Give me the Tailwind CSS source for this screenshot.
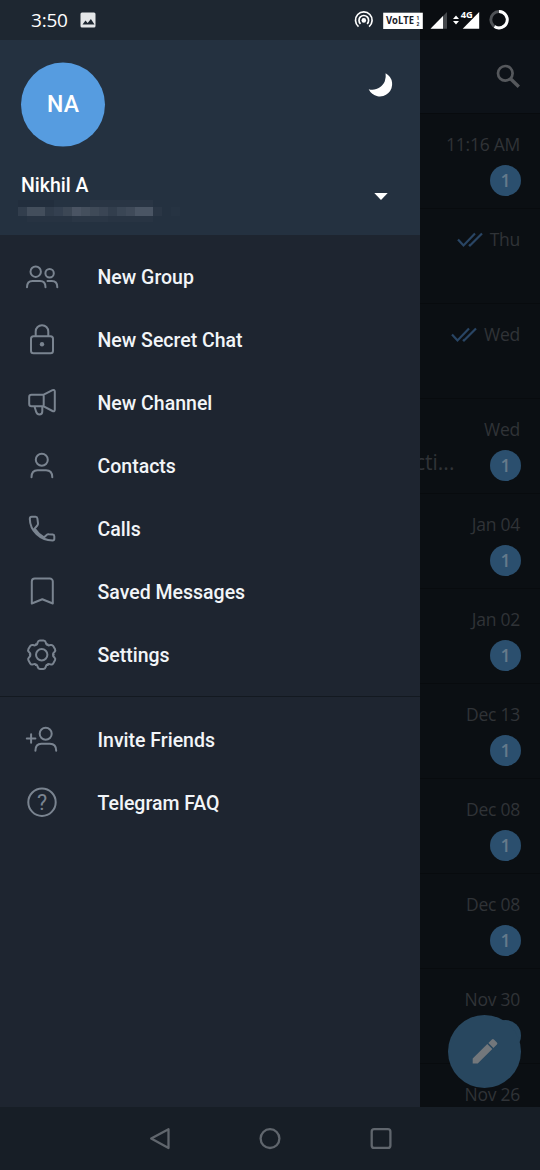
<!DOCTYPE html>
<html lang="en">
<head>
<meta charset="utf-8">
<title>Telegram</title>
<script src="https://cdn.jsdelivr.net/npm/@tailwindcss/browser@4"></script>
</head>
<body class="bg-black">
<div class="relative flex h-[1170px] w-[540px] flex-col overflow-hidden bg-[#0b0f13] font-['Roboto',sans-serif]">

  <div class="flex h-[1107px] overflow-hidden">
    <!-- Drawer -->
    <aside class="flex w-[420px] shrink-0 flex-col bg-[#1e2530]">
      <header class="flex h-[235px] shrink-0 justify-between bg-[#243140] pt-[62px]">
        <div class="flex flex-col pl-[21px]">
          <div class="flex size-[84px] translate-y-[0.6px] items-center justify-center rounded-full bg-[#569ce0] pt-px text-[23px] font-medium text-white">NA</div>
          <div class="mt-[28px] text-[19.500px] leading-6 font-medium text-white">Nikhil A</div>
          <div class="mt-[2px] -ml-[3px] flex flex-col">
            <div class="flex h-[7px]"><i class="w-[36px] bg-[#222e3d]"></i><i class="w-[36px] bg-[#253241]"></i><i class="w-[63px] bg-[#293544]"></i></div>
            <div class="flex h-[9px]">
              <i class="w-[9px] bg-[#323e4d]"></i><i class="w-[18px] bg-[#434e5c]"></i><i class="w-[9px] bg-[#303c4b]"></i><i class="w-[9px] bg-[#344050]"></i><i class="w-[9px] bg-[#3c4755]"></i><i class="w-[9px] bg-[#4a5463]"></i><i class="w-[9px] bg-[#444f5d]"></i><i class="w-[9px] bg-[#3f4a58]"></i><i class="w-[9px] bg-[#3a4554]"></i><i class="w-[9px] bg-[#323e4d]"></i><i class="w-[9px] bg-[#3a4655]"></i><i class="w-[9px] bg-[#3f4a59]"></i><i class="w-[18px] bg-[#4a5564]"></i><i class="w-[9px] bg-[#2a3645]"></i><i class="w-[9px] bg-[#243140]"></i><i class="w-[9px] bg-[#263342]"></i>
            </div>
            <div class="flex h-[6px] pl-[9px]"><i class="w-[45px] bg-[#273342]"></i><i class="w-[36px] bg-[#2a3645]"></i><i class="w-[45px] bg-[#283443]"></i></div>
          </div>
        </div>
        <svg class="h-[173px] w-[80px] shrink-0" viewBox="340 62 80 173">
          <path d="M385.600 73.200A12.300 12.300 0 1 1 368.700 89.200C375.500 91.300 382.500 87 384.800 81.300Q386.200 77.500 385.600 73.200Z" fill="#fff"/>
          <path d="M374.300 193h13.400l-6.700 7z" fill="#fff"/>
        </svg>
      </header>

      <nav class="flex flex-col pt-[11px] text-[19.5px] font-medium text-[#f2f5f8]">
        <div class="flex h-[63px] items-center gap-[33.5px] pl-5">
          <svg class="size-11" viewBox="20 256 44 44" fill="none" stroke="#7a8490" stroke-width="2" stroke-linecap="round"><circle cx="35.700" cy="271.700" r="5.200"/><circle cx="49.600" cy="273.200" r="4.200"/><path d="M27 287.200c0-4.200 2-6.200 5.500-6.200h7.500c3.500 0 5.500 2 5.500 6.200M47.500 281h4.300c3.500 0 5.500 2 5.500 6.200"/></svg>
          <span>New Group</span>
        </div>
        <div class="flex h-[63px] items-center gap-[33.5px] pl-5">
          <svg class="size-11" viewBox="20 319 44 44" fill="none" stroke="#7a8490" stroke-width="2"><rect x="31" y="336.300" width="22" height="17" rx="2.500"/><path d="M35.700 336v-4.500a6.300 6.300 0 0 1 12.600 0v4.500"/><circle cx="42" cy="344.300" r="2.200" fill="#7a8490" stroke="none"/></svg>
          <span>New Secret Chat</span>
        </div>
        <div class="flex h-[63px] items-center gap-[33.5px] pl-5">
          <svg class="size-11" viewBox="20 382 44 44" fill="none" stroke="#7a8490" stroke-width="2" stroke-linejoin="round"><path d="M43.700 394.700H31.500a2.300 2.300 0 0 0-2.300 2.300v7a2.300 2.300 0 0 0 2.300 2.300h12.200zM43.700 394.700L52.500 390.200Q54.800 389.200 54.800 391.500V409.500Q54.800 412 52.500 411L43.700 406.300M34.500 406.500L36.300 412.200Q37.200 414.500 39.300 414.500Q42.300 414.500 42.300 411.500V406.500"/></svg>
          <span>New Channel</span>
        </div>
        <div class="flex h-[63px] items-center gap-[33.5px] pl-5">
          <svg class="size-11" viewBox="20 445 44 44" fill="none" stroke="#7a8490" stroke-width="2" stroke-linecap="round"><circle cx="41.800" cy="459.700" r="6"/><path d="M31.500 477.200c0-4.800 2-7 6-7h8.500c4 0 6.300 2.200 6.300 7"/></svg>
          <span>Contacts</span>
        </div>
        <div class="flex h-[63px] items-center gap-[33.5px] pl-5">
          <svg class="size-11" viewBox="20 508 44 44" fill="none" stroke="#7a8490" stroke-width="2" stroke-linejoin="round"><path d="M31.800 516.800H35.600Q37.200 516.800 37.400 518.500L38 523.300Q38.100 524.600 37.300 525.500L34.600 528.600Q38.200 534 43.900 537.400L46.600 534.900Q47.500 534 48.800 534.200L52.700 534.500Q54.300 534.700 54.300 536.300V538.800Q54.300 540.500 52.600 540.500C40 540.300 30 530.500 29.800 518.900Q29.800 516.800 31.800 516.800Z"/></svg>
          <span>Calls</span>
        </div>
        <div class="flex h-[63px] items-center gap-[33.5px] pl-5">
          <svg class="size-11" viewBox="20 571 44 44" fill="none" stroke="#7a8490" stroke-width="2" stroke-linejoin="round"><path d="M34.800 578.500h15a3 3 0 0 1 3 3v22l-10.500-4.300-10.500 4.300v-22a3 3 0 0 1 3-3z"/></svg>
          <span>Saved Messages</span>
        </div>
        <div class="flex h-[63px] items-center gap-[33.5px] pl-5">
          <svg class="size-11" viewBox="-21.700 -20.700 44 44" fill="none" stroke="#7a8490" stroke-width="2" stroke-linecap="round">
            <defs><path id="tooth" d="M-5.900-10.220C-4.800-9.600-4.300-11-4-12.400C-3.600-14-3-14.300-1.800-14.300H1.800C3-14.300 3.600-14 4-12.400C4.300-11 4.800-9.600 5.900-10.220"/></defs>
            <use href="#tooth"/><use href="#tooth" transform="rotate(60)"/><use href="#tooth" transform="rotate(120)"/><use href="#tooth" transform="rotate(180)"/><use href="#tooth" transform="rotate(240)"/><use href="#tooth" transform="rotate(300)"/>
            <circle r="5.700"/>
          </svg>
          <span>Settings</span>
        </div>
        <div class="mt-[9px] mb-[12px] h-px bg-[#131920]"></div>
        <div class="flex h-[63px] items-center gap-[33.5px] pl-5">
          <svg class="size-11" viewBox="20 719 44 44" fill="none" stroke="#7a8490" stroke-width="2" stroke-linecap="round"><circle cx="45.700" cy="733.700" r="6"/><path d="M35.400 750.700c0-4.800 2-7 6-7h8.500c4 0 6.300 2.200 6.300 7M26.800 738.500h8.600M31.100 734.200v8.600"/></svg>
          <span>Invite Friends</span>
        </div>
        <div class="flex h-[63px] items-center gap-[33.5px] pl-5">
          <svg class="size-11" viewBox="20 782 44 44"><circle cx="42" cy="802.200" r="13.700" fill="none" stroke="#7a8490" stroke-width="2"/><text x="42" y="809.800" text-anchor="middle" font-size="21.500" font-weight="400" fill="#7a8490">?</text></svg>
          <span>Telegram FAQ</span>
        </div>
      </nav>
    </aside>

    <!-- Dimmed chat list -->
    <main class="flex w-[120px] shrink-0 flex-col font-['Open_Sans',sans-serif] text-[17.500px] tracking-[-0.25px] text-[#303337]">
      <div class="flex h-[113px] shrink-0 justify-end bg-[#0d1218] pt-[60px] pr-4">
        <svg class="size-8" viewBox="492 60 32 32" fill="none" stroke="#55585c" stroke-width="2.700"><circle cx="505.300" cy="73.300" r="7.300"/><path d="M510.300 78.500l8.500 8.300" stroke-width="3.400"/></svg>
      </div>
      <div class="flex h-[95px] shrink-0 flex-col items-end border-t border-[#080b0e] pt-[18px] pr-5"><span class="leading-[25px] whitespace-nowrap">11:16 AM</span><b class="mt-[8px] -mr-px flex size-[31px] items-center justify-center rounded-full bg-[#2b4f6e] font-semibold text-[#657a8b]">1</b></div>
      <div class="flex h-[95px] shrink-0 justify-end gap-[7px] border-t border-[#080b0e] pt-[18px] pr-5"><svg class="mt-[4px] h-[18px] w-[26px]" viewBox="0 0 26 18" fill="none" stroke="#294564" stroke-width="2.200"><path d="M1 8.500l5.500 6L18 2.500M12 13.500l1 1L25 2.500"/></svg><span class="leading-[25px]">Thu</span></div>
      <div class="flex h-[95px] shrink-0 justify-end gap-[7px] border-t border-[#080b0e] pt-[18px] pr-5"><svg class="mt-[4px] h-[18px] w-[26px]" viewBox="0 0 26 18" fill="none" stroke="#294564" stroke-width="2.200"><path d="M1 8.500l5.500 6L18 2.500M12 13.500l1 1L25 2.500"/></svg><span class="leading-[25px]">Wed</span></div>
      <div class="flex h-[95px] shrink-0 justify-between overflow-hidden border-t border-[#080b0e] pt-[18px] pr-5"><span class="-ml-[5px] pt-[31px] text-[21px] leading-[28px] tracking-normal">cti...</span><span class="flex flex-col items-end"><span class="leading-[25px]">Wed</span><b class="mt-[8px] -mr-px flex size-[31px] items-center justify-center rounded-full bg-[#2b4f6e] font-semibold text-[#657a8b]">1</b></span></div>
      <div class="flex h-[95px] shrink-0 flex-col items-end border-t border-[#080b0e] pt-[18px] pr-5"><span class="leading-[25px]">Jan 04</span><b class="mt-[8px] -mr-px flex size-[31px] items-center justify-center rounded-full bg-[#2b4f6e] font-semibold text-[#657a8b]">1</b></div>
      <div class="flex h-[95px] shrink-0 flex-col items-end border-t border-[#080b0e] pt-[18px] pr-5"><span class="leading-[25px]">Jan 02</span><b class="mt-[8px] -mr-px flex size-[31px] items-center justify-center rounded-full bg-[#2b4f6e] font-semibold text-[#657a8b]">1</b></div>
      <div class="flex h-[95px] shrink-0 flex-col items-end border-t border-[#080b0e] pt-[18px] pr-5"><span class="leading-[25px]">Dec 13</span><b class="mt-[8px] -mr-px flex size-[31px] items-center justify-center rounded-full bg-[#2b4f6e] font-semibold text-[#657a8b]">1</b></div>
      <div class="flex h-[95px] shrink-0 flex-col items-end border-t border-[#080b0e] pt-[18px] pr-5"><span class="leading-[25px]">Dec 08</span><b class="mt-[8px] -mr-px flex size-[31px] items-center justify-center rounded-full bg-[#2b4f6e] font-semibold text-[#657a8b]">1</b></div>
      <div class="flex h-[95px] shrink-0 flex-col items-end border-t border-[#080b0e] pt-[18px] pr-5"><span class="leading-[25px]">Dec 08</span><b class="mt-[8px] -mr-px flex size-[31px] items-center justify-center rounded-full bg-[#2b4f6e] font-semibold text-[#657a8b]">1</b></div>
      <div class="flex h-[95px] shrink-0 flex-col items-end border-t border-[#080b0e] pt-[18px] pr-5"><span class="leading-[25px]">Nov 30</span><b class="mt-[8px] -mr-px size-[31px] rounded-full bg-[#28475f]"></b></div>
      <div class="flex h-[95px] shrink-0 flex-col items-end border-t border-[#080b0e] pt-[18px] pr-5"><span class="leading-[25px]">Nov 26</span></div>
    </main>
  </div>

  <!-- System navigation -->
  <footer class="flex h-[63px] shrink-0 justify-center bg-[#171e26]">
    <svg class="h-[63px] w-[300px]" viewBox="120 1107 300 63" fill="none" stroke="#60666d" stroke-width="2.300" stroke-linejoin="round"><path d="M168.500 1129.300V1148L151.200 1138.600Z"/><circle cx="270" cy="1138.600" r="9.400"/><rect x="371.700" y="1129.200" width="18.700" height="18.700" rx="2.500"/></svg>
  </footer>

  <!-- Compose button -->
  <div class="absolute top-[1015px] left-[448px] flex size-[73px] items-center justify-center rounded-full bg-[#28475f]">
    <svg class="size-8" viewBox="469 1036 32 32" fill="#73777b"><path d="M472.700 1063.500v-5l14.600-14.500 5 5-14.600 14.500zM488.400 1042.900l3.500-3.500q1-1 2 0l3 3q1 1 0 2l-3.500 3.500z"/></svg>
  </div>

  <!-- Status bar -->
  <div class="absolute inset-x-0 top-0 flex h-10 items-center justify-between">
    <div class="flex h-10 w-[420px] shrink-0 items-center gap-[12px] bg-[#1e2731] pl-[31px]">
      <span class="font-['Open_Sans',sans-serif] text-[19px] tracking-[-0.2px] text-white">3:50</span>
      <svg class="size-4" viewBox="0 0 16 16"><rect x=".5" y=".5" width="15" height="15" rx="1.500" fill="#e4e6e8"/><path d="M2.500 12.500l3-4 2.200 2.600 3.200-4.200 3.600 5.600z" fill="#1e2731"/></svg>
    </div>
    <div class="h-10 w-[120px] shrink-0 bg-[#0a0d11]"></div>
    <svg class="absolute top-0 right-0 h-10 w-[200px]" viewBox="340 0 200 40">
      <g fill="none" stroke="#fff" stroke-width="1.700"><path d="M358.500 26.600a8.300 8.300 0 1 1 10.600 0M360.500 23.800a4.800 4.800 0 1 1 6.600 0"/></g><circle cx="363.800" cy="20.400" r="2.300" fill="#fff"/>
      <rect x="383.200" y="12.700" width="39.600" height="16.300" fill="#fff"/>
      <text x="386" y="24.400" font-family="Open Sans" font-size="10" font-weight="700" fill="#1a2028" textLength="28" lengthAdjust="spacingAndGlyphs">VoLTE</text>
      <text x="416.500" y="19.800" font-family="Roboto" font-size="5" font-weight="700" fill="#1a2028">1</text><text x="416.500" y="26.200" font-family="Roboto" font-size="5" font-weight="700" fill="#1a2028">2</text>
      <path d="M447 12v16.700h-16.500z" fill="#45484c"/><path d="M443 16v12.700h-12.500z" fill="#fff"/>
      <path d="M453 19l3-3.500 3 3.500zM453 21l3 3.500 3-3.500z" fill="#fff"/>
      <path d="M479.200 12v16.700h-16.500z" fill="#fff"/>
      <text x="460.800" y="17.700" font-family="Open Sans" font-size="9.300" font-weight="700" fill="#fff" stroke="#0a0d11" stroke-width="1.500" paint-order="stroke">4G</text>
      <circle cx="499" cy="19.700" r="8.200" fill="none" stroke="#505357" stroke-width="2.900"/><path d="M499 11.500a8.200 8.200 0 1 1-4.500 15" fill="none" stroke="#fff" stroke-width="2.900"/>
    </svg>
  </div>
</div>
</body>
</html>
